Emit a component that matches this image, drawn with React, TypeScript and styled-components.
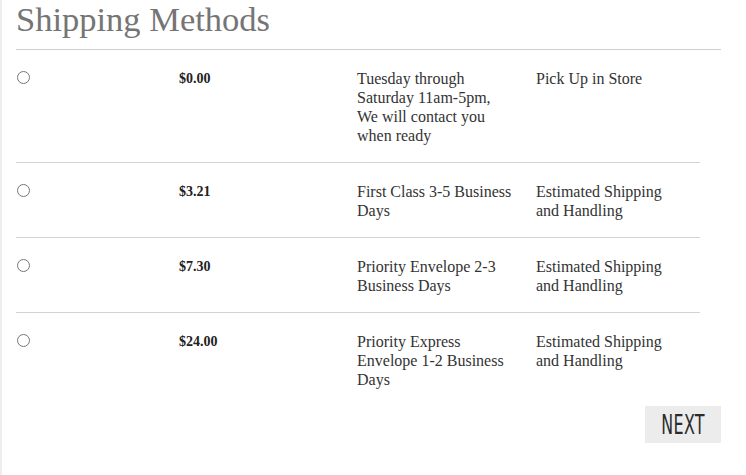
import React from "react";
import styled, { createGlobalStyle } from "styled-components";

const Global = createGlobalStyle`
  html, body { margin: 0; padding: 0; background: #fff; }
  body { font-family: "Liberation Serif", "Times New Roman", serif; color: #333; }
`;

const Page = styled.div`
  min-height: 475px;
  border-left: 2px solid #eeeeee;
  padding-left: 14px;
  box-sizing: border-box;
`;

const Section = styled.div`
  width: 705px;
  display: flex;
  flex-direction: column;
`;

const Title = styled.h1`
  margin: 0;
  font-family: "Liberation Serif", "Times New Roman", serif;
  font-weight: normal;
  font-size: 34.5px;
  line-height: 38px;
  color: #757575;
  padding-bottom: 11px;
  border-bottom: 1px solid #cfcfcf;
`;

const List = styled.div`
  width: 684px;
  display: flex;
  flex-direction: column;
`;

const Row = styled.label<{ $last?: boolean }>`
  display: grid;
  grid-template-columns: 163px 178px 179px 164px;
  padding: 19px 0 17px;
  border-bottom: ${(p) => (p.$last ? "none" : "1px solid #d2d2d2")};
  font-size: 16px;
  line-height: 19px;
  color: #333;
`;

const Radio = styled.input`
  width: 13px;
  height: 13px;
  margin: 1px 0 0 1px;
`;

const Price = styled.div`
  font-weight: bold;
  font-size: 14px;
  color: #222;
`;

const Desc = styled.div`
  padding-right: 22px;
`;

const Type = styled.div`
  padding-right: 26px;
`;

const Footer = styled.div`
  display: flex;
  justify-content: flex-end;
`;

const NextButton = styled.button`
  width: 76px;
  height: 37px;
  border: none;
  background: #ececec;
  color: #2b2b2b;
  display: flex;
  align-items: center;
  justify-content: center;
  padding: 0;
  cursor: pointer;
`;

const NextLabel = styled.span`
  display: inline-block;
  font-family: "Liberation Sans Narrow", "DejaVu Sans Condensed", "Liberation Sans", sans-serif;
  font-size: 26px;
  line-height: 26px;
  letter-spacing: 0.5px;
  transform: scaleX(0.68);
`;

const methods = [
  { price: "$0.00", desc: "Tuesday through Saturday 11am-5pm, We will contact you when ready", type: "Pick Up in Store" },
  { price: "$3.21", desc: "First Class 3-5 Business Days", type: "Estimated Shipping and Handling" },
  { price: "$7.30", desc: "Priority Envelope 2-3 Business Days", type: "Estimated Shipping and Handling" },
  { price: "$24.00", desc: "Priority Express Envelope 1-2 Business Days", type: "Estimated Shipping and Handling" },
];

export default function App() {
  return (
    <>
      <Global />
      <Page>
        <Section>
          <Title>Shipping Methods</Title>
          <List>
            {methods.map((m, i) => (
              <Row key={i} $last={i === methods.length - 1}>
                <div>
                  <Radio type="radio" name="shipping" />
                </div>
                <Price>{m.price}</Price>
                <Desc>{m.desc}</Desc>
                <Type>{m.type}</Type>
              </Row>
            ))}
          </List>
          <Footer>
            <NextButton>
              <NextLabel>NEXT</NextLabel>
            </NextButton>
          </Footer>
        </Section>
      </Page>
    </>
  );
}
